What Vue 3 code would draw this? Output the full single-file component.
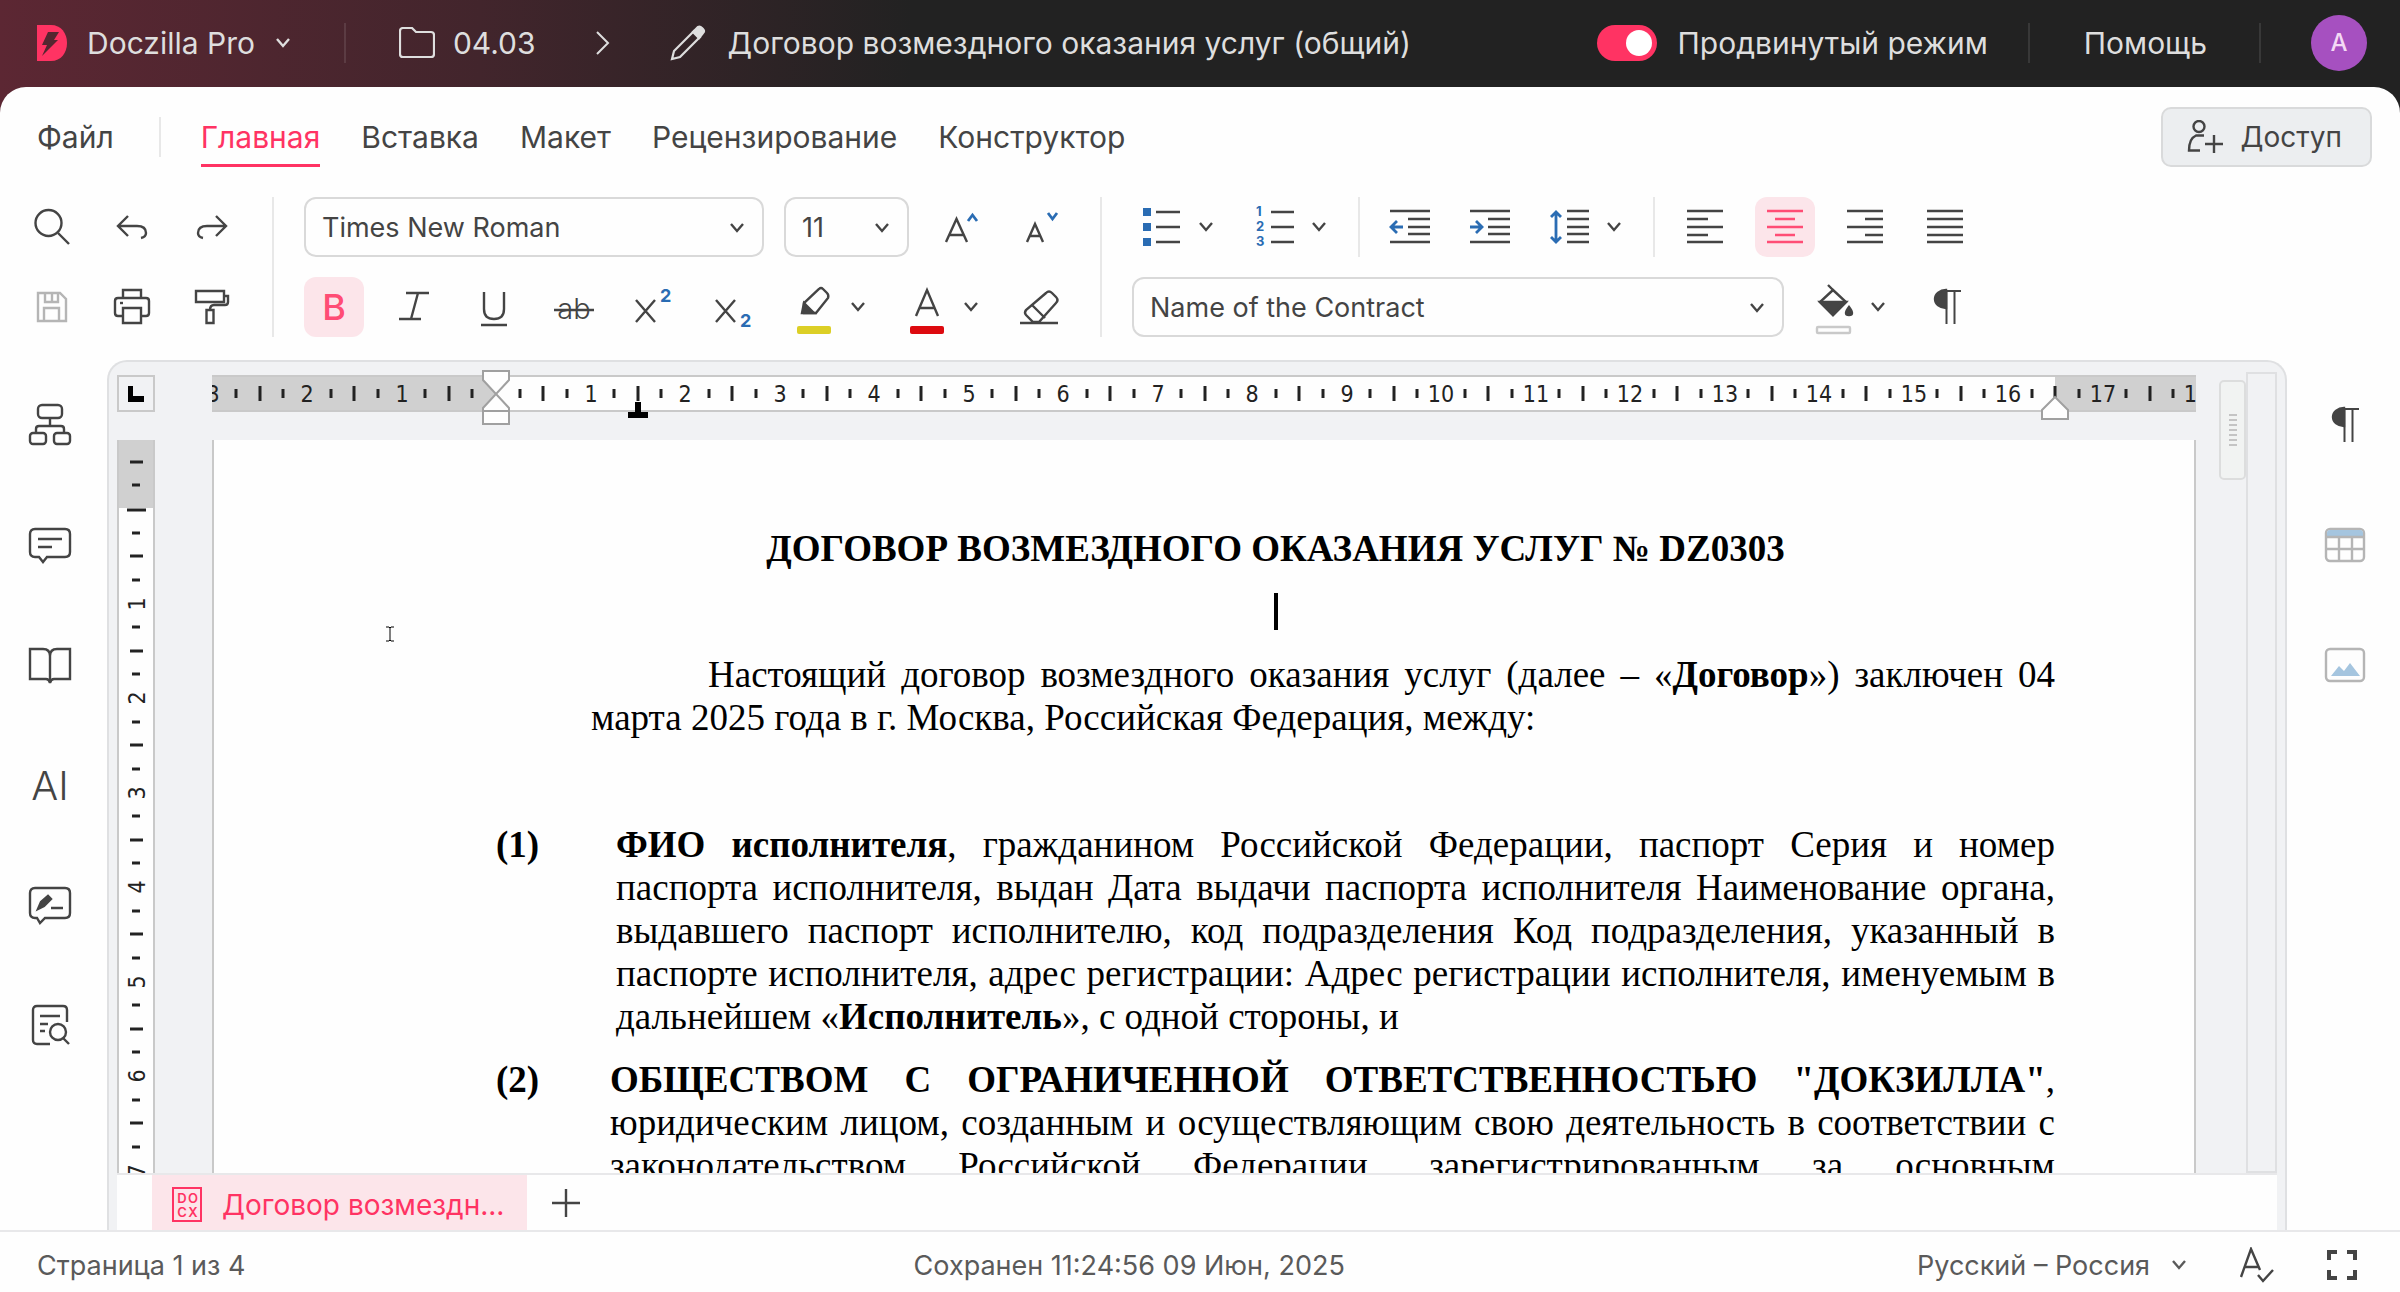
<script setup>
import { h, ref } from 'vue'

const Chevron = () =>
  h('svg', { class: 'chevron', viewBox: '0 0 16 12', width: 16, height: 12, 'aria-hidden': 'true' }, [
    h('path', { d: 'M2 2l6 7 6-7', fill: 'none', stroke: 'currentColor', 'stroke-width': 2.4 })
  ])

const Pilcrow = () =>
  h('svg', { viewBox: '0 0 40 40', width: 40, height: 40, 'aria-hidden': 'true' }, [
    h('path', { d: 'M19 3a11 9 0 0 0 0 18z', fill: 'currentColor' }),
    h('path', { d: 'M16 4h18M19.500 4v33M27.500 4v33', fill: 'none', stroke: 'currentColor', 'stroke-width': 2 })
  ])

const tabs = ['Главная', 'Вставка', 'Макет', 'Рецензирование', 'Конструктор']
const activeTab = ref('Главная')
const advanced = ref(true)

const unit = 94.5
const zeroX = 284
const zeroY = 69

function marks(from, to, zero) {
  const list = []
  for (let q = from * 4; q <= to * 4; q++) {
    if (q === 0) continue
    const kind = q % 4 === 0 ? 'number' : q % 2 === 0 ? 'half' : 'quarter'
    list.push({ q, kind, label: Math.abs(q / 4), pos: Math.round(zero + (q * unit) / 4) })
  }
  return list
}
const across = marks(-3, 18, zeroX)
const down = marks(-0.5, 7, zeroY)

const aligns = [
  { name: 'По левому краю', d: 'M2 4h36M2 12h21M2 20h36M2 28h21M2 35h36' },
  { name: 'По центру', d: 'M2 4h36M10 12h20M2 20h36M10 28h20M2 35h36', on: true },
  { name: 'По правому краю', d: 'M2 4h36M20 12h18M2 20h36M20 28h18M2 35h36' },
  { name: 'По ширине', d: 'M2 4h36M2 12h36M2 20h36M2 28h36M2 35h36' }
]
</script>

<template>
  <div class="app">
    <header class="top">
      <button class="brand" type="button">
        <svg width="30" height="36" viewBox="0 0 30 36" aria-hidden="true">
          <path d="M0 0h14c10 0 16 8 16 18s-6 18-16 18H0z" fill="#ff3363" />
          <path d="M11 7h11l-5 8h4L5 31l5-11H5z" fill="#542630" />
        </svg>
        <span>Doczilla Pro</span>
        <Chevron />
      </button>
      <span class="rule"></span>
      <nav class="crumbs">
        <a href="#" class="crumb">
          <svg width="36" height="32" viewBox="0 0 36 32" fill="none" stroke="currentColor" stroke-width="2.200" aria-hidden="true">
            <path d="M1 4q0-3 3-3h9l4 4h15q3 0 3 3v19q0 3-3 3H4q-3 0-3-3z" />
          </svg>
          <span>04.03</span>
        </a>
        <svg class="sep" width="14" height="24" viewBox="0 0 14 24" fill="none" stroke="currentColor" stroke-width="2" aria-hidden="true">
          <path d="M1 1l11 11L1 23" />
        </svg>
        <a href="#" class="crumb doc">
          <svg width="36" height="36" viewBox="0 0 36 36" fill="none" stroke="currentColor" stroke-width="2.200" aria-hidden="true">
            <path d="M2 34l2-8L24 6l6 6L10 32z" />
            <path d="M23 7l5-5q2-1 4 1l1 1q2 2 0 4l-4 5z" fill="currentColor" />
          </svg>
          <span>Договор возмездного оказания услуг (общий)</span>
        </a>
      </nav>
      <div class="account">
        <label class="mode">
          <input v-model="advanced" type="checkbox" />
          <span>Продвинутый режим</span>
        </label>
        <span class="rule"></span>
        <a href="#" class="help">Помощь</a>
        <span class="rule"></span>
        <button class="avatar" type="button">A</button>
      </div>
    </header>

    <main class="sheet">
      <div class="menu">
        <button class="tab" type="button">Файл</button>
        <span class="line"></span>
        <nav class="tabs">
          <button
            v-for="t in tabs"
            :key="t"
            type="button"
            class="tab"
            :class="{ active: t === activeTab }"
            @click="activeTab = t"
          >{{ t }}</button>
        </nav>
        <button class="access" type="button">
          <svg width="36" height="34" viewBox="0 0 36 34" fill="none" stroke="currentColor" stroke-width="2.400" aria-hidden="true">
            <circle cx="12" cy="6.500" r="5.500" />
            <path d="M17 15.500H9q-7 3-7 15h11M18 24h18M27 15v18" />
          </svg>
          Доступ
        </button>
      </div>

      <div class="toolbar">
        <div class="group">
          <div class="row">
            <button class="tool" type="button" aria-label="Поиск">
              <svg viewBox="0 0 40 40"><circle cx="16.500" cy="16" r="13" /><path d="M26 26l11 11" /></svg>
            </button>
            <button class="tool" type="button" aria-label="Отменить">
              <svg viewBox="0 0 40 40"><path d="M16 9l-10 10 10 10M6 19h19q9 0 9 7 0 4-5 5" /></svg>
            </button>
            <button class="tool" type="button" aria-label="Повторить">
              <svg viewBox="0 0 40 40"><path d="M24 9l10 10-10 10M34 19H15q-9 0-9 7 0 4 5 5" /></svg>
            </button>
          </div>
          <div class="row">
            <button class="tool off" type="button" aria-label="Сохранить" disabled>
              <svg viewBox="0 0 40 40"><path d="M6 6h22l6 6v22H6zM13 6v9h13V6M20 6v9M12 34V21h15v13" /></svg>
            </button>
            <button class="tool" type="button" aria-label="Печать">
              <svg viewBox="0 0 40 40"><path d="M11 11V3h18v8M10 29H6q-3 0-3-3V14q0-3 3-3h28q3 0 3 3v12q0 3-3 3h-4M11 21h18v15H11z" /><path d="M8 16h3" /></svg>
            </button>
            <button class="tool" type="button" aria-label="Формат по образцу">
              <svg viewBox="0 0 40 40"><path d="M4 4h28v11H4zM32 9h4v6q0 3-3 3H22q-4 0-4 5M14.500 23h7v13h-7z" /></svg>
            </button>
          </div>
        </div>

        <span class="line"></span>

        <div class="group">
          <div class="row">
            <span class="field font">
              <select aria-label="Шрифт"><option>Times New Roman</option></select>
              <Chevron />
            </span>
            <span class="field size">
              <select aria-label="Размер"><option>11</option></select>
              <Chevron />
            </span>
            <button class="tool" type="button" aria-label="Увеличить шрифт">
              <svg viewBox="0 0 40 40"><path d="M7 35l10.500-23L28 35M11 28h13" /><path class="blue" d="M29 14l4.500-6 4.500 6" /></svg>
            </button>
            <button class="tool" type="button" aria-label="Уменьшить шрифт">
              <svg viewBox="0 0 40 40"><path d="M8 35l8-18 8 18M11 29h10" /><path class="blue" d="M29 6l4.500 6L38 6" /></svg>
            </button>
          </div>
          <div class="row">
            <button class="tool on bold" type="button" aria-label="Полужирный">B</button>
            <button class="tool" type="button" aria-label="Курсив">
              <svg viewBox="0 0 40 40"><path d="M12 6h23M5 32h22M24 6l-7 26" /></svg>
            </button>
            <button class="tool" type="button" aria-label="Подчёркнутый">
              <svg viewBox="0 0 40 40"><path d="M10 5v17q0 10 10 10t10-10V5M7 38h26" /></svg>
            </button>
            <button class="tool strike" type="button" aria-label="Зачёркнутый">
              <svg viewBox="0 0 40 40"><path d="M0 23h40" /><text x="20" y="32" font-size="29" text-anchor="middle">ab</text></svg>
            </button>
            <button class="tool" type="button" aria-label="Надстрочный">
              <svg viewBox="0 0 40 40"><path d="M2 13l19 22M21 13L2 35" /><text class="num" x="26" y="15" font-size="18">2</text></svg>
            </button>
            <button class="tool" type="button" aria-label="Подстрочный">
              <svg viewBox="0 0 40 40"><path d="M2 13l19 22M21 13L2 35" /><text class="num" x="26" y="40" font-size="18">2</text></svg>
            </button>
            <div class="split">
              <button class="tool" type="button" aria-label="Цвет выделения">
                <svg class="tall" viewBox="0 0 40 50"><path d="M25 4q2-2 4 0l4 4q2 2 1 5L22 28H10V18z" /><path d="M10 18l10 10H8z" fill="currentColor" /><rect x="3" y="41" width="34" height="8" rx="2" class="yellow" /></svg>
              </button>
              <button class="more" type="button" aria-label="Выбрать цвет выделения"><Chevron /></button>
            </div>
            <div class="split">
              <button class="tool" type="button" aria-label="Цвет текста">
                <svg class="tall" viewBox="0 0 40 50"><path d="M9 31L20 5l11 26M13 23h14" /><rect x="3" y="41" width="34" height="8" rx="2" class="red" /></svg>
              </button>
              <button class="more" type="button" aria-label="Выбрать цвет текста"><Chevron /></button>
            </div>
            <button class="tool" type="button" aria-label="Очистить формат">
              <svg viewBox="0 0 40 40"><path d="M26 6q3-3 6 0l4 4q3 3 0 6L19 35h-6l-7-7q-2-2 0-5zM12 18l13 13M0 36h38" /></svg>
            </button>
          </div>
        </div>

        <span class="line"></span>

        <div class="group">
          <div class="row">
            <div class="split">
              <button class="tool" type="button" aria-label="Маркированный список">
                <svg viewBox="0 0 40 40"><path class="thick" d="M14 5h24M14 20h24M14 35h24" /><path class="dots" d="M1 1h8v8H1zM1 16h8v8H1zM1 31h8v8H1z" /></svg>
              </button>
              <button class="more" type="button" aria-label="Вид маркеров"><Chevron /></button>
            </div>
            <div class="split">
              <button class="tool" type="button" aria-label="Нумерованный список">
                <svg viewBox="0 0 40 40"><path class="thick" d="M16 5h23M16 20h23M16 35h23" /><text class="num" x="1" y="9" font-size="13">1</text><text class="num" x="1" y="24" font-size="13">2</text><text class="num" x="1" y="39" font-size="13">3</text></svg>
              </button>
              <button class="more" type="button" aria-label="Вид нумерации"><Chevron /></button>
            </div>
            <span class="line"></span>
            <button class="tool" type="button" aria-label="Уменьшить отступ">
              <svg viewBox="0 0 40 40"><path class="thick" d="M0 4h40M18 12h22M18 20h22M18 27h22M0 35h40" /><path class="blue" d="M13 20H1M7 14l-6 6 6 6" /></svg>
            </button>
            <button class="tool" type="button" aria-label="Увеличить отступ">
              <svg viewBox="0 0 40 40"><path class="thick" d="M0 4h40M18 12h22M18 20h22M18 27h22M0 35h40" /><path class="blue" d="M0 20h12M6 14l6 6-6 6" /></svg>
            </button>
            <div class="split">
              <button class="tool" type="button" aria-label="Интервал">
                <svg viewBox="0 0 40 40"><path class="thick" d="M17 4h22M17 12h22M17 20h22M17 27h22M17 35h22" /><path class="blue" d="M6 5v30M1 10l5-5 5 5M1 30l5 5 5-5" /></svg>
              </button>
              <button class="more" type="button" aria-label="Выбрать интервал"><Chevron /></button>
            </div>
            <span class="line"></span>
            <button v-for="a in aligns" :key="a.name" class="tool" :class="{ on: a.on }" type="button" :aria-label="a.name">
              <svg viewBox="0 0 40 40"><path class="thick" :d="a.d" /></svg>
            </button>
          </div>
          <div class="row">
            <span class="field style">
              <select aria-label="Стиль"><option>Name of the Contract</option></select>
              <Chevron />
            </span>
            <div class="split">
              <button class="tool" type="button" aria-label="Заливка">
                <svg class="tall" viewBox="0 0 40 50"><path d="M14 0l5 5M19 5L6 17l13 13 13-13z" /><path d="M6 17h26L19 30z" fill="currentColor" /><path d="M35 22q6 8 0 8t0-8z" fill="currentColor" /><rect x="3" y="42" width="33" height="6" rx="1" class="empty" /></svg>
              </button>
              <button class="more" type="button" aria-label="Выбрать заливку"><Chevron /></button>
            </div>
            <button class="tool" type="button" aria-label="Непечатаемые знаки"><Pilcrow /></button>
          </div>
        </div>
      </div>

      <div class="body">
        <aside class="side">
          <button class="tool" type="button" aria-label="Структура">
            <svg viewBox="0 0 40 40"><rect x="8" y="0" width="24" height="13" rx="4" /><path d="M20 13v8M6 28v-4q0-3 3-3h22q3 0 3 3v4" /><rect x="0" y="28" width="16" height="11" rx="3" /><rect x="24" y="28" width="16" height="11" rx="3" /></svg>
          </button>
          <button class="tool" type="button" aria-label="Комментарии">
            <svg viewBox="0 0 40 40"><path d="M5 4h30q5 0 5 5v18q0 5-5 5H17l-4 5-4-5H5q-5 0-5-5V9q0-5 5-5zM8 14h24M8 22h14" /></svg>
          </button>
          <button class="tool" type="button" aria-label="Справочник">
            <svg viewBox="0 0 40 40"><path d="M0 4h13q7 0 7 7 0-7 7-7h13v30H24q-3 0-4 4-1-4-4-4H0zM20 11v24" /></svg>
          </button>
          <button class="tool ai" type="button">AI</button>
          <button class="tool" type="button" aria-label="Рецензии">
            <svg viewBox="0 0 40 40"><path d="M5 3h30q5 0 5 5v20q0 5-5 5H15l-5 5-3-5H5q-5 0-5-5V8q0-5 5-5zM21 23h12" /><path d="M8 24l3-7 7-6 3 3-7 7z" fill="currentColor" /></svg>
          </button>
          <button class="tool" type="button" aria-label="Поиск по документу">
            <svg viewBox="0 0 40 40"><path d="M20 39H7q-4 0-4-4V5q0-4 4-4h26q4 0 4 4v12M10 11h20M10 19h8M10 26h5" /><circle cx="28" cy="27" r="8" /><path d="M33 33l6 6" /></svg>
          </button>
        </aside>

        <section class="panel">
          <div class="work">
            <div class="gauge">
              <div class="stop"><svg width="16" height="16" viewBox="0 0 16 16" aria-hidden="true"><path d="M0 0h5v10h11v6H0z" /></svg></div>
              <div class="vruler">
                <span class="margin"></span>
                <svg class="marks" width="34" height="100%" aria-hidden="true">
                  <path d="M8 70h19" />
                  <template v-for="m in down" :key="m.q">
                    <text v-if="m.kind === 'number'" :transform="`translate(26 ${m.pos}) rotate(-90)`">{{ m.label }}</text>
                    <path v-else-if="m.kind === 'half'" :d="`M11 ${m.pos}h13`" />
                    <path v-else :d="`M13 ${m.pos}h8`" />
                  </template>
                </svg>
              </div>
            </div>

            <div class="center">
              <div class="hruler">
                <span class="margin left"></span>
                <span class="text"></span>
                <span class="margin right"></span>
                <svg class="marks" width="100%" height="33" aria-hidden="true">
                  <template v-for="m in across" :key="m.q">
                    <text v-if="m.kind === 'number'" :x="m.pos" y="25">{{ m.label }}</text>
                    <path v-else-if="m.kind === 'half'" :d="`M${m.pos} 9v15`" />
                    <path v-else :d="`M${m.pos} 12v9`" />
                  </template>
                </svg>
                <svg class="knob indent" width="28" height="56" viewBox="0 0 28 56" aria-hidden="true">
                  <path d="M1 1h26v9L14 24l13 14v3H1v-3l13-14L1 10zM1 41h26v13H1z" />
                </svg>
                <svg class="tabstop" width="20" height="16" viewBox="0 0 20 16" aria-hidden="true"><path d="M7 0h6v10h7v6H0v-6h7z" /></svg>
                <svg class="knob end" width="28" height="26" viewBox="0 0 28 26" aria-hidden="true"><path d="M14 2l13 13v9H1v-9z" /></svg>
              </div>

              <article class="page">
                <h1>ДОГОВОР ВОЗМЕЗДНОГО ОКАЗАНИЯ УСЛУГ № DZ0303</h1>
                <p class="blank"><span class="caret"></span></p>
                <p class="intro">
                  <span class="full first">Настоящий договор возмездного оказания услуг (далее – «<b>Договор</b>») заключен 04</span>
                  <span>марта 2025 года в г. Москва, Российская Федерация, между:</span>
                </p>
                <div class="clause">
                  <b class="no">(1)</b>
                  <p>
                    <span class="full"><b>ФИО исполнителя</b>, гражданином Российской Федерации, паспорт Серия и номер</span>
                    <span class="full">паспорта исполнителя, выдан Дата выдачи паспорта исполнителя Наименование органа,</span>
                    <span class="full">выдавшего паспорт исполнителю, код подразделения Код подразделения, указанный в</span>
                    <span class="full">паспорте исполнителя, адрес регистрации: Адрес регистрации исполнителя, именуемым в</span>
                    <span>дальнейшем «<b>Исполнитель</b>», с одной стороны, и</span>
                  </p>
                </div>
                <div class="clause second">
                  <b class="no">(2)</b>
                  <p>
                    <span class="full"><b>ОБЩЕСТВОМ С ОГРАНИЧЕННОЙ ОТВЕТСТВЕННОСТЬЮ "ДОКЗИЛЛА"</b>,</span>
                    <span class="full">юридическим лицом, созданным и осуществляющим свою деятельность в соответствии с</span>
                    <span class="full">законодательством Российской Федерации, зарегистрированным за основным</span>
                  </p>
                </div>
                <svg class="pointer" width="8" height="16" viewBox="0 0 8 16" aria-hidden="true"><path d="M0 1h3l1 1 1-1h3M4 2v12M0 15h3l1-1 1 1h3" /></svg>
              </article>
            </div>

            <div class="scroll">
              <div class="thumb"><i v-for="n in 7" :key="n"></i></div>
              <div class="track"></div>
            </div>
          </div>

          <div class="strip">
            <button class="file" type="button">
              <svg width="30" height="35" viewBox="0 0 30 35" aria-hidden="true">
                <rect x="1" y="1" width="28" height="33" />
                <text x="10" y="16">D</text><text x="21" y="16">O</text><text x="10" y="30">C</text><text x="21" y="30">X</text>
              </svg>
              <span>Договор возмездн...</span>
            </button>
            <button class="add" type="button" aria-label="Добавить">
              <svg width="28" height="28" viewBox="0 0 28 28"><path d="M14 0v28M0 14h28" /></svg>
            </button>
          </div>
        </section>

        <aside class="side right">
          <button class="tool" type="button" aria-label="Абзац"><Pilcrow /></button>
          <button class="tool off" type="button" aria-label="Таблица" disabled>
            <svg viewBox="0 0 40 40"><rect x="1" y="4" width="38" height="32" rx="4" /><path d="M2 11V8q0-3 3-3h30q3 0 3 3v3z" fill="#a5c5df" stroke="none" /><path d="M1 12h38M1 24h38M14 12v24M27 12v24" /></svg>
          </button>
          <button class="tool off" type="button" aria-label="Изображение" disabled>
            <svg viewBox="0 0 40 40"><rect x="1" y="4" width="38" height="32" rx="4" /><path d="M6 31l8-10 5 5 6-8 10 13z" fill="#a5c5df" stroke="none" /></svg>
          </button>
        </aside>
      </div>

      <footer class="status">
        <span>Страница 1 из 4</span>
        <span class="saved">Сохранен 11:24:56 09 Июн, 2025</span>
        <div class="tools">
          <span class="lang">
            <select aria-label="Язык"><option>Русский – Россия</option></select>
            <Chevron />
          </span>
          <button class="small" type="button" aria-label="Проверка правописания">
            <svg width="36" height="36" viewBox="0 0 36 36"><path d="M2 30L12 2l9 21M6 20h14M19 28l5 6 10-11" /></svg>
          </button>
          <button class="small" type="button" aria-label="На весь экран">
            <svg width="30" height="30" viewBox="0 0 30 30"><path class="frame" d="M2 10V2h8M20 2h8v8M28 20v8h-8M10 28H2v-8" /></svg>
          </button>
        </div>
      </footer>
    </main>
  </div>
</template>

<style>
body {
  margin: 0;
}
</style>

<style scoped>
.app {
  display: flex;
  flex-direction: column;
  height: 100vh;
  overflow: hidden;
  font-family: Inter, sans-serif;
  font-size: 30px;
  color: #444;
  background: linear-gradient(90deg, #5c2733 0, #42252c 20%, #222 38%, #222 100%);
}
* {
  box-sizing: border-box;
}
button,
select {
  font: inherit;
  color: inherit;
  background: none;
  border: 0;
  padding: 0;
  margin: 0;
}
select {
  appearance: none;
  width: 100%;
  height: 100%;
}
a {
  color: inherit;
  text-decoration: none;
}
p,
h1 {
  margin: 0;
}
svg {
  display: block;
  flex: none;
}

.top {
  display: flex;
  align-items: center;
  height: 87px;
  flex: none;
  padding: 0 33px 2px 37px;
  color: #dedede;
  white-space: nowrap;
}
.brand {
  display: flex;
  align-items: center;
  gap: 20px;
}
.rule {
  width: 2px;
  height: 40px;
  background: #fff;
  opacity: 0.1;
}
.brand + .rule {
  margin: 0 53px;
}
.crumbs {
  display: flex;
  align-items: center;
  gap: 60px;
}
.crumb {
  display: flex;
  align-items: center;
  gap: 18px;
}
.crumb.doc {
  gap: 22px;
}
.account {
  display: flex;
  align-items: center;
  margin-left: auto;
}
.mode {
  display: flex;
  align-items: center;
  gap: 20px;
}
.mode input {
  appearance: none;
  display: flex;
  align-items: center;
  width: 60px;
  height: 36px;
  margin: 0;
  padding: 5px;
  border-radius: 18px;
  background: #777;
}
.mode input::before {
  content: '';
  width: 26px;
  height: 26px;
  border-radius: 50%;
  background: #fff;
}
.mode input:checked {
  justify-content: flex-end;
  background: #ff3363;
}
.account .rule {
  margin: 0 50px 0 40px;
}
.help {
  padding-left: 4px;
  margin-right: 12px;
}
.avatar {
  width: 56px;
  height: 56px;
  border-radius: 50%;
  background: #a650c0;
  color: #f4d9f5;
  font-size: 24px;
  font-weight: 500;
}

.sheet {
  flex: 1;
  min-height: 0;
  display: flex;
  flex-direction: column;
  background: #fefefe;
  border-radius: 26px 26px 0 0;
}
.menu {
  display: flex;
  align-items: center;
  padding: 20px 28px 30px 37px;
}
.line {
  width: 2px;
  align-self: stretch;
  background: #e8e8e8;
}
.menu > .line {
  align-self: center;
  height: 40px;
  margin: 0 40px 0 45px;
}
.tabs {
  display: flex;
  gap: 41px;
}
.tab {
  height: 60px;
  border-top: 3px solid transparent;
  border-bottom: 3px solid transparent;
}
.tab.active {
  color: #ff3363;
  border-bottom-color: #ff3363;
}
.access {
  display: flex;
  align-items: center;
  gap: 18px;
  height: 60px;
  margin-left: auto;
  padding: 0 28px 0 24px;
  border: 2px solid #d9dadb;
  border-radius: 10px;
  background: #eceef0;
  font-size: 28px;
}

.toolbar {
  display: flex;
  gap: 30px;
  padding: 0 22px 23px;
}
.group {
  display: flex;
  flex-direction: column;
  gap: 20px;
}
.row {
  display: flex;
  gap: 20px;
  height: 60px;
}
.tool {
  display: flex;
  align-items: center;
  justify-content: center;
  width: 60px;
  height: 60px;
  flex: none;
  border-radius: 12px;
}
.tool svg {
  width: 40px;
  height: 40px;
  overflow: visible;
  fill: none;
  stroke: currentColor;
  stroke-width: 2.4;
}
.tool svg.tall {
  height: 50px;
  margin-top: 6px;
}
.tool svg text {
  fill: currentColor;
  stroke: none;
}
.tool svg .thick {
  stroke-width: 2.6;
}
.tool svg .blue {
  stroke: #2a6cb3;
  stroke-width: 2.8;
}
.tool svg .num {
  fill: #2a6cb3;
  font-weight: 700;
}
.tool svg .dots {
  fill: #2a6cb3;
  stroke: none;
}
.tool svg .yellow {
  fill: #dccf26;
  stroke: none;
}
.tool svg .red {
  fill: #dd0a0f;
  stroke: none;
}
.tool svg .empty {
  stroke: #c9c9c9;
}
.tool.on {
  background: #fce5ea;
  color: #ff4d75;
}
.tool.off {
  color: #b5b5b5;
}
.bold {
  font-size: 36px;
  font-weight: 500;
}
.strike {
  font-weight: 300;
}
.split {
  display: flex;
  width: 93px;
}
.more {
  width: 28px;
  display: flex;
  align-items: center;
  justify-content: center;
}
.field {
  position: relative;
  display: flex;
  height: 60px;
  border: 2px solid #d9d9d9;
  border-radius: 12px;
  font-size: 27px;
}
.field select {
  padding: 0 50px 0 16px;
}
.field .chevron {
  position: absolute;
  right: 17px;
  top: 23px;
  pointer-events: none;
}
.font {
  width: 460px;
}
.size {
  width: 125px;
}
.style {
  width: 652px;
}

.body {
  flex: 1;
  min-height: 0;
  display: flex;
}
.side {
  width: 107px;
  padding: 35px 0 0 20px;
  display: flex;
  flex-direction: column;
  gap: 60px;
}
.side.right {
  width: 113px;
  padding-left: 28px;
}
.ai {
  font-size: 40px;
  font-weight: 300;
}
.panel {
  flex: 1;
  min-width: 0;
  display: flex;
  flex-direction: column;
  border: 2px solid #dfe0e2;
  border-bottom: 0;
  border-radius: 20px 20px 0 0;
  background: #f1f2f4;
}
.work {
  flex: 1;
  min-height: 0;
  display: flex;
  overflow: hidden;
  padding: 0 8px;
}
.gauge {
  width: 38px;
  display: flex;
  flex-direction: column;
  padding-top: 13px;
}
.stop {
  height: 37px;
  flex: none;
  display: flex;
  align-items: center;
  justify-content: center;
  border: 2px solid #c9c9c9;
}
.vruler {
  position: relative;
  flex: 1;
  margin-top: 28px;
  border: solid #c9c9c9;
  border-width: 0 2px;
  background: #fefefe;
}
.vruler .margin {
  display: block;
  height: 68px;
}
.margin {
  background: #d0d0d0;
}
.marks {
  position: absolute;
  left: 0;
  top: 0;
  stroke: #222;
  stroke-width: 3;
}
.marks text {
  font-family: 'DejaVu Sans Condensed', 'DejaVu Sans', sans-serif;
  font-size: 23px;
  text-anchor: middle;
  stroke: none;
  fill: #222;
}
.center {
  flex: 1;
  min-width: 0;
  margin-left: 57px;
  padding-top: 13px;
  display: flex;
  flex-direction: column;
}
.hruler {
  position: relative;
  display: flex;
  height: 37px;
  flex: none;
  border: solid #c9c9c9;
  border-width: 2px 0;
}
.hruler .left {
  width: 284px;
}
.hruler .text {
  flex: 1;
  background: #fefefe;
}
.hruler .right {
  width: 141px;
}
.knob {
  position: absolute;
  fill: #fefefe;
  stroke: #a0a0a0;
  stroke-width: 2;
}
.indent {
  left: 270px;
  top: -7px;
}
.end {
  right: 127px;
  top: 18px;
}
.tabstop {
  position: absolute;
  left: 416px;
  top: 25px;
}
.page {
  position: relative;
  flex: 1;
  min-height: 0;
  margin-top: 28px;
  padding: 87px 139px 0 282px;
  border: solid #c9c9c9;
  border-width: 0 2px;
  background: #fefefe;
  color: #000;
  font-family: 'Liberation Serif', serif;
  font-size: 37px;
  line-height: 43px;
  white-space: nowrap;
}
.page h1 {
  font-size: inherit;
  font-weight: 700;
  text-align: center;
  margin-bottom: 20px;
}
.blank {
  display: flex;
  align-items: center;
  justify-content: center;
  height: 43px;
  margin-bottom: 20px;
}
.caret {
  width: 4px;
  height: 37px;
  background: #000;
}
.page p > span:not(.caret) {
  display: block;
}
.page .full {
  white-space: normal;
  text-align: justify;
  text-align-last: justify;
}
.intro {
  padding-left: 95px;
  margin-bottom: 84px;
}
.first {
  padding-left: 117px;
}
.clause {
  display: flex;
  margin-bottom: 20px;
}
.no {
  width: 120px;
  flex: none;
}
.second .no {
  width: 114px;
}
.clause p {
  flex: 1;
}
.pointer {
  position: absolute;
  left: 172px;
  top: 186px;
  fill: none;
  stroke: #000;
}
.scroll {
  display: flex;
  margin-left: 23px;
  padding-top: 10px;
}
.thumb {
  display: flex;
  flex-direction: column;
  align-items: center;
  justify-content: center;
  gap: 3px;
  width: 27px;
  height: 100px;
  margin-top: 8px;
  border: 2px solid #dcdddd;
  border-radius: 5px;
  background: #f1f3f2;
}
.thumb i {
  width: 8px;
  height: 2px;
  background: #c4c4c4;
}
.track {
  width: 31px;
  border: 2px solid #dfe0e2;
}
.strip {
  display: flex;
  height: 57px;
  flex: none;
  margin: 0 8px;
  padding-left: 35px;
  border-top: 2px solid #e8e8ea;
  background: #fefefe;
}
.file {
  display: flex;
  align-items: center;
  gap: 20px;
  width: 375px;
  padding: 4px 0 0 20px;
  background: #fce5ea;
  color: #ff3363;
  font-size: 28px;
}
.file svg {
  fill: none;
  stroke: currentColor;
  stroke-width: 2;
}
.file text {
  fill: currentColor;
  stroke: none;
  font-size: 13px;
  font-weight: 600;
  text-anchor: middle;
}
.add {
  padding: 0 25px;
}
.add svg,
.small svg {
  fill: none;
  stroke: #444;
  stroke-width: 2.4;
}
.small .frame {
  stroke-width: 4;
}
.status {
  display: flex;
  align-items: center;
  height: 62px;
  flex: none;
  padding: 6px 43px 0 37px;
  border-top: 2px solid #e8e8ea;
  color: #5a5a5a;
  font-size: 27px;
}
.saved {
  flex: 1;
  padding-left: 96px;
  text-align: center;
}
.tools {
  display: flex;
  align-items: center;
}
.lang {
  display: flex;
  align-items: center;
  gap: 20px;
  margin-right: 52px;
}
.lang select {
  width: auto;
}
.small + .small {
  margin-left: 52px;
}
</style>
